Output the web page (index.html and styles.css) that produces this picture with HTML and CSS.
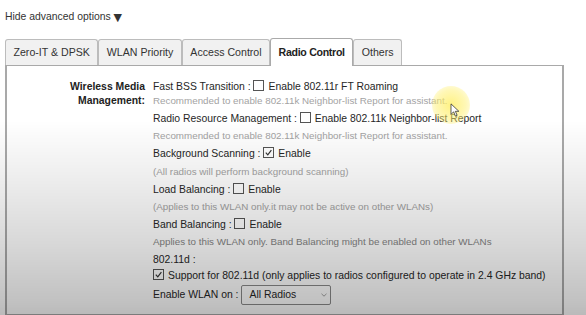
FILE: index.html
```html
<!DOCTYPE html>
<html lang="en">
<head>
    <meta charset="UTF-8">
    <title>Radio Control</title>
    <link rel="stylesheet" href="styles.css">
</head>
<body>

<div class="page">
    <div class="toggle">Hide advanced options <span class="arrow">&#9660;</span></div>

    <div class="tabs">
        <div class="tab">Zero-IT &amp; DPSK</div>
        <div class="tab">WLAN Priority</div>
        <div class="tab">Access Control</div>
        <div class="tab active">Radio Control</div>
        <div class="tab">Others</div>
    </div>

    <div class="panel">
        <div class="field">
            <div class="field-label">Wireless Media<br>Management:</div>
            <div class="field-body">
                <div class="line">Fast BSS Transition : <span class="check"></span>Enable 802.11r FT Roaming</div>
                <div class="line hint first">Recommended to enable 802.11k Neighbor-list Report for assistant.</div>

                <div class="line">Radio Resource Management : <span class="check"></span>Enable 802.11k Neighbor-list Report</div>
                <div class="line hint">Recommended to enable 802.11k Neighbor-list Report for assistant.</div>

                <div class="line">Background Scanning : <span class="check checked"><svg viewBox="0 0 10 10"><polyline points="2,5.2 4.2,7.6 8.2,2.4"/></svg></span>Enable</div>
                <div class="line hint">(All radios will perform background scanning)</div>

                <div class="line">Load Balancing : <span class="check"></span>Enable</div>
                <div class="line hint">(Applies to this WLAN only.it may not be active on other WLANs)</div>

                <div class="line">Band Balancing : <span class="check"></span>Enable</div>
                <div class="line hint notice">Applies to this WLAN only. Band Balancing might be enabled on other WLANs</div>

                <div class="line">802.11d :</div>
                <div class="line tight"><span class="check checked"><svg viewBox="0 0 10 10"><polyline points="2,5.2 4.2,7.6 8.2,2.4"/></svg></span>Support for 802.11d (only applies to radios configured to operate in 2.4 GHz band)</div>

                <div class="line select-line">Enable WLAN on :
                    <div class="select">
                        <span>All Radios</span>
                        <svg class="chevron" viewBox="0 0 6 4"><polyline points="0.5,0.8 3,3.2 5.5,0.8"/></svg>
                    </div>
                </div>
            </div>
        </div>
    </div>
</div>

<!-- mouse pointer with its highlight, as captured -->
<div class="pointer">
    <svg viewBox="0 0 10 16"><path d="M1,1 L1,13 L4,10 L6,15 L8,14 L6,9.5 L10,9.5 Z"/></svg>
</div>

<div class="shade"></div>

</body>
</html>
```

FILE: styles.css
```css
/* Page */
body {
    margin: 0;
    font-family: 'Liberation Sans', Arial, sans-serif;
    font-size: 10.4px;
    color: #262626;
    background-color: #ffffff;
    width: 586px;
    height: 315px;
    overflow: hidden;
}

.page {
    padding: 10px 0 0 5px;
}

.toggle {
    line-height: 14px;
    color: #333;
}

.arrow {
    font-family: 'DejaVu Sans', sans-serif;
    font-size: 11px;
    vertical-align: -1px;
}

/* Tabs */
.tabs {
    display: flex;
    align-items: flex-end;
    margin-top: 14px;
    height: 26px;
}

.tab {
    height: 25px;
    line-height: 25px;
    padding: 0 7.5px;
    font-size: 10.6px;
    border: 1px solid #bcbcbc;
    border-bottom: none;
    border-radius: 3px 3px 0 0;
    background-color: #f1f1f1;
    color: #333;
}

.tab.active {
    height: 27px;
    line-height: 27px;
    margin-bottom: -1px;
    position: relative;
    z-index: 1;
    background-color: #ffffff;
    font-weight: bold;
    letter-spacing: -0.3px;
    color: #222;
    border-color: #aaa;
}

/* Panel */
.panel {
    width: 559px;
    height: 250px;
    box-sizing: border-box;
    border: 1px solid #a9a9a9;
    border-width: 1px 2px 1px 2px;
    padding-top: 14px;
}

.field {
    display: flex;
    gap: 8px;
}

.field-label {
    width: 138px;
    text-align: right;
    font-weight: bold;
    line-height: 14px;
    color: #222;
}

.field-body {
    display: flex;
    flex-direction: column;
}

.line {
    line-height: 14px;
    margin-top: 4.2px;
    white-space: nowrap;
}

.line:first-child {
    margin-top: 0;
}

.hint {
    font-size: 9.8px;
    color: #a3a3a3;
    margin-top: 3.1px;
}

.hint.first {
    margin-top: 0;
}

.hint.notice {
    color: #858585;
}

.tight {
    margin-top: 1.6px;
}

/* Checkboxes */
.check {
    display: inline-block;
    width: 9px;
    height: 9px;
    border: 1px solid #555;
    background-color: #fff;
    vertical-align: -1px;
    margin-right: 4px;
}

.check svg {
    display: block;
    width: 9px;
    height: 9px;
    fill: none;
    stroke: #333;
    stroke-width: 1.3;
}

/* Select */
.select-line {
    display: flex;
    align-items: center;
    margin-top: 2px;
}

.select {
    display: flex;
    align-items: center;
    justify-content: space-between;
    width: 90px;
    height: 20px;
    box-sizing: border-box;
    margin-left: 3px;
    padding: 0 3px 0 7px;
    border: 1px solid #8a8a8a;
    border-radius: 2px;
    background-color: #fff;
}

.chevron {
    width: 6px;
    height: 4px;
    fill: none;
    stroke: #999;
    stroke-width: 0.9;
}

/* Pointer highlight */
.pointer {
    position: absolute;
    left: 432px;
    top: 86px;
    width: 38px;
    height: 38px;
    border-radius: 50%;
    background: radial-gradient(circle, rgba(255, 238, 90, 0.75) 0, rgba(255, 240, 110, 0.5) 55%, rgba(255, 245, 150, 0) 100%);
}

.pointer svg {
    position: absolute;
    left: 18px;
    top: 17px;
    width: 9px;
    height: 14px;
    fill: #fff;
    stroke: #333;
    stroke-width: 0.9;
}

/* Video capture darkening toward the bottom */
.shade {
    position: fixed;
    left: 0;
    top: 0;
    width: 586px;
    height: 315px;
    pointer-events: none;
    background: linear-gradient(to bottom,
        rgba(0, 0, 0, 0) 0,
        rgba(0, 0, 0, 0) 120px,
        rgba(0, 0, 0, 0.06) 170px,
        rgba(0, 0, 0, 0.15) 240px,
        rgba(0, 0, 0, 0.24) 300px,
        rgba(0, 0, 0, 0.27) 315px);
}
```
